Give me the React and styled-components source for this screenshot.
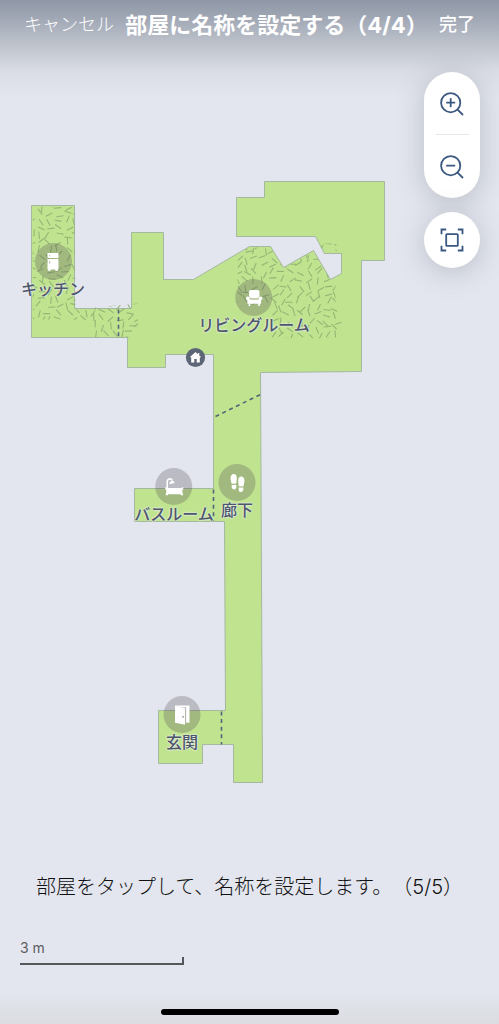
import React from "react";
import styled, { createGlobalStyle } from "styled-components";

const GlobalStyle = createGlobalStyle`
  *, *::before, *::after { box-sizing: border-box; }
  body {
    margin: 0;
    background: #e3e6ee;
    font-family: Inter, "Noto Sans CJK JP", sans-serif;
    text-spacing-trim: space-all;
  }
  button { font: inherit; border: 0; padding: 0; background: none; cursor: pointer; }
`;

const Screen = styled.div`
  display: flex;
  flex-direction: column;
  min-height: 100vh;
  background:
    linear-gradient(to bottom, #9097a6 0, #9aa1af 12px, #b0b6c1 32px, #c6cad2 52px, #dadde5 72px, rgba(227, 230, 238, 0) 98px),
    linear-gradient(to top, #dadce1 0, rgba(227, 230, 238, 0) 32px),
    #e3e6ee;
`;

const Header = styled.header`
  display: flex;
  align-items: center;
  justify-content: space-between;
  height: 50px;
  padding: 0 24px;
  color: #fff;
  white-space: nowrap;
`;

const HeaderButton = styled.button`
  color: #fff;
  font-size: 18px;
  line-height: 28px;
  font-weight: ${(p) => (p.$strong ? 500 : 300)};
`;

const Title = styled.h1`
  margin: 0;
  font-size: 22px;
  line-height: 32px;
  font-weight: 700;
`;

const Stage = styled.main`
  position: relative;
  flex: 1;
`;

const Plan = styled.div`
  position: relative;
  max-width: 560px;
  margin: 0 auto;
`;

const PlanDrawing = styled.svg`
  display: block;
  width: 100%;
  height: auto;
`;

const Pin = styled.button`
  position: absolute;
  left: ${(p) => (p.$x / PLAN.width) * 100}%;
  top: ${(p) => ((p.$y - PLAN.top) / PLAN.height) * 100}%;
  transform: translate(-50%, -18px);
  display: flex;
  flex-direction: column;
  align-items: center;
`;

const PinDisc = styled.span`
  display: grid;
  place-items: center;
  width: 37px;
  height: 37px;
  border-radius: 50%;
  background: rgba(82, 72, 84, 0.27);
`;

const PinLabel = styled.span`
  font-size: 16px;
  line-height: 18px;
  font-weight: 500;
  color: #4d566a;
  white-space: nowrap;
  text-shadow: 0 0 2px #eef0f4, 0 0 2px #eef0f4;
`;

const Controls = styled.div`
  position: absolute;
  top: 22px;
  right: 19px;
  display: flex;
  flex-direction: column;
  gap: 14px;
`;

const ControlGroup = styled.div`
  display: flex;
  flex-direction: column;
  align-items: center;
  width: 56px;
  border-radius: 28px;
  background: #fff;
  box-shadow: 0 4px 28px rgba(70, 76, 92, 0.26);
`;

const ControlButton = styled.button`
  display: grid;
  place-items: center;
  width: 56px;
  height: ${(p) => (p.$round ? 56 : 63)}px;
  color: #3b5881;
`;

const ControlDivider = styled.hr`
  width: 33px;
  height: 1px;
  margin: -1px 0 0;
  border: 0;
  background: #e6e7ea;
`;

const Footer = styled.footer`
  display: flex;
  flex-direction: column;
`;

const Hint = styled.p`
  margin: 0;
  text-align: center;
  font-size: 20px;
  line-height: 32px;
  font-weight: 300;
  color: #111;
`;

const Scale = styled.div`
  width: 164px;
  margin: 36px 0 0 20px;
`;

const ScaleLabel = styled.div`
  font-size: 14px;
  line-height: 18px;
  color: #5b5c60;
`;

const ScaleBar = styled.div`
  height: 8px;
  border: solid #56575b;
  border-width: 0 2px 2px 0;
`;

const HomeIndicator = styled.div`
  width: 178px;
  height: 6px;
  margin: 44px auto 9px;
  border-radius: 3px;
  background: #000;
`;

const PLAN = { width: 499, top: 50, height: 800 };

const OUTLINE =
  "31,205 74,205 74,308 131,308 131,232 163,232 163,279 193,279 249,246 270,246 283,267 313,250 330,279 341,273 341,253 324,253 315,236 236,236 236,197 264,197 264,181 384,181 384,260 361,260 361,371 260,372 262,782 233,782 233,744 202,744 202,763 158,763 158,710 225,710 224,521 134,521 134,488 213,488 213,354 165,354 165,367 127,367 127,337 31,337";

const CARPETS = [
  "32,206 74,206 75,309 137,303 138,337 95,337 88,326 74,319 32,319",
  "237,253 249,247 270,247 283,268 313,251 330,280 335,284 335,306 342,306 342,338 271,338 271,305 237,305",
  "318,243 336,243 336,252 324,252",
];

const DOORS = [
  [118, 309, 118, 337],
  [215, 416, 260, 394],
  [213, 489, 213, 520],
  [221, 711, 221, 744],
];

// Short carpet fibres scattered on a jittered grid with a fixed seed.
function makeFibres(x0, y0, x1, y1, seed) {
  let s = seed;
  const next = () => {
    s = (s * 16807) % 2147483647;
    return s / 2147483647;
  };
  let d = "";
  for (let y = y0; y < y1; y += 7) {
    for (let x = x0; x < x1; x += 9) {
      const cx = x + next() * 6;
      const cy = y + next() * 5;
      const angle = next() * Math.PI;
      const dx = Math.cos(angle) * 3.6;
      const dy = Math.sin(angle) * 3.6;
      d += `M${(cx - dx).toFixed(1)} ${(cy - dy).toFixed(1)}L${(cx + dx).toFixed(1)} ${(cy + dy).toFixed(1)}`;
    }
  }
  return d;
}

const FIBRES = makeFibres(28, 204, 142, 340, 4711) + makeFibres(234, 242, 346, 342, 9137);

function FloorPlan() {
  return (
    <PlanDrawing viewBox={`0 ${PLAN.top} ${PLAN.width} ${PLAN.height}`} aria-hidden="true">
      <defs>
        <clipPath id="carpet">
          {CARPETS.map((points) => (
            <polygon key={points} points={points} />
          ))}
        </clipPath>
      </defs>
      <g transform="translate(0.5 0.5)">
        <polygon points={OUTLINE} fill="#bfe38f" stroke="#a5b8a0" strokeWidth="1" />
        <path d={FIBRES} clipPath="url(#carpet)" stroke="#94b675" strokeWidth="1.1" fill="none" />
        {DOORS.map(([x1, y1, x2, y2]) => (
          <line key={`${x1}-${y1}`} x1={x1} y1={y1} x2={x2} y2={y2} stroke="#56637a" strokeWidth="1.6" strokeDasharray="4 3.6" />
        ))}
        <circle cx="195" cy="357" r="9.6" fill="#5c6677" />
        <path d="M195 351.600l-5.800 5.200h1.500v5.200h3.100v-3.400h2.400v3.400h3.100v-5.200h1.500l-2-1.800v-2.500h-1.500v1.200z" fill="#fff" />
      </g>
    </PlanDrawing>
  );
}

const Fridge = () => (
  <svg width="20" height="20" viewBox="0 0 20 20">
    <path d="M4.500 1h11v5h-11zM4.500 7h11v10.500h-.8V19h-1.900l-.7-1.500H7.900L7.200 19H5.300v-1.500h-.8z" fill="#fff" />
    <path d="M6.700 3v1.300M6.700 8.800v2.800" stroke="#b4bfae" strokeWidth="1" />
  </svg>
);

const Armchair = () => (
  <svg width="20" height="20" viewBox="0 0 20 20">
    <rect x="4.800" y="2" width="10.400" height="8.400" rx="1.600" fill="#fff" />
    <path d="M3.700 8.600c1.200 0 1.900.8 1.900 1.900v.9h8.800v-.9c0-1.100.7-1.900 1.900-1.900s1.900.8 1.900 1.800-.6 1.600-1.400 1.800v3.600h-1.100V18h-1.700v-2.200H6V18H4.300v-2.200H3.200v-3.600c-.8-.2-1.400-.8-1.400-1.800s.7-1.800 1.900-1.800z" fill="#fff" />
    <path d="M4.300 8.200c1.200.3 1.700 1.100 1.700 2.300v.3h8v-.3c0-1.200.5-2 1.700-2.300" fill="none" stroke="#a8bd93" strokeWidth="0.500" />
  </svg>
);

const Bathtub = () => (
  <svg width="20" height="20" viewBox="0 0 20 20">
    <path d="M3 11V4.600A2.600 2.600 0 0 1 8 3.500" fill="none" stroke="#fff" strokeWidth="1.600" />
    <path d="M5.300 7.200c0-2.300 1.300-3.700 3-3.400 1.200.2 2 1 2.100 2.300z" fill="#fff" />
    <path d="M1 10.300h1.500v.8h15v-.8H19v2.200h-.8v3.900h.6v1.800h-2.200v-1H3.700v1H1.500v-1.800h.5v-3.900H1z" fill="#fff" />
  </svg>
);

const Footprints = () => (
  <svg width="20" height="20" viewBox="0 0 20 20">
    <path d="M6.300 1c2 0 3 1.900 3 4.200 0 1.500-.4 3.400-.6 5.400l-4.600.2C3.900 9 3 7.300 3 5.200 3 2.900 4.300 1 6.300 1zM4.200 12l4.600-.2v2.300c0 1.500-.8 2.300-2.100 2.300-1.400 0-2.500-.9-2.500-2.400z" fill="#fff" />
    <path d="M13.700 3.600c2 0 3.300 1.900 3.300 4.200 0 2-.9 3.800-1.100 5.600l-4.600-.2c-.2-2-.6-3.900-.6-5.400 0-2.300 1-4.200 3-4.200zM11.200 14.400l4.600.2v2c0 1.500-1.100 2.400-2.500 2.400-1.300 0-2.100-.8-2.100-2.300z" fill="#fff" />
  </svg>
);

const Door = () => (
  <svg width="20" height="20" viewBox="0 0 20 20">
    <path d="M2.500.6H17v17.200h-3.400V2.200H8z" fill="#fff" />
    <path d="M2.500.6l10 2.600v16.600l-10-2z" fill="#fff" />
    <path d="M13 3v15" stroke="#b8b5b9" strokeWidth="0.800" />
    <circle cx="10.600" cy="11.800" r="0.900" fill="#8f8d92" />
  </svg>
);

const ROOMS = [
  { name: "キッチン", x: 53, y: 261, Icon: Fridge },
  { name: "リビングルーム", x: 254, y: 297, Icon: Armchair },
  { name: "バスルーム", x: 174, y: 486, Icon: Bathtub },
  { name: "廊下", x: 237, y: 482, Icon: Footprints },
  { name: "玄関", x: 182, y: 714, Icon: Door },
];

const ZoomIcon = ({ plus }) => (
  <svg width="24" height="24" viewBox="0 0 24 24" fill="none" stroke="currentColor" strokeWidth="1.8">
    <circle cx="10.7" cy="10.7" r="9.6" />
    <path d="M17.6 17.6l5.400 5.400M6.200 10.700h9" />
    {plus && <path d="M10.700 6.200v9" />}
  </svg>
);

const FitIcon = () => (
  <svg width="24" height="24" viewBox="0 0 24 24" fill="none" stroke="currentColor" strokeWidth="1.8">
    <path d="M1.500 6.200V1.500h4.700M17.800 1.500h4.700v4.700M22.500 17.800v4.700h-4.700M6.200 22.500H1.500v-4.700" />
    <rect x="6.2" y="6.2" width="11.6" height="11.6" rx="0.6" />
  </svg>
);

export default function App() {
  return (
    <>
      <GlobalStyle />
      <Screen>
        <Header>
          <HeaderButton type="button">キャンセル</HeaderButton>
          <Title>部屋に名称を設定する（4/4）</Title>
          <HeaderButton type="button" $strong>完了</HeaderButton>
        </Header>
        <Stage>
          <Plan>
            <FloorPlan />
            {ROOMS.map(({ name, x, y, Icon }) => (
              <Pin key={name} type="button" $x={x} $y={y}>
                <PinDisc><Icon /></PinDisc>
                <PinLabel>{name}</PinLabel>
              </Pin>
            ))}
          </Plan>
          <Controls>
            <ControlGroup>
              <ControlButton type="button" aria-label="拡大"><ZoomIcon plus /></ControlButton>
              <ControlDivider />
              <ControlButton type="button" aria-label="縮小"><ZoomIcon /></ControlButton>
            </ControlGroup>
            <ControlGroup>
              <ControlButton type="button" aria-label="全体を表示" $round><FitIcon /></ControlButton>
            </ControlGroup>
          </Controls>
        </Stage>
        <Footer>
          <Hint>部屋をタップして、名称を設定します。（5/5）</Hint>
          <Scale>
            <ScaleLabel>3 m</ScaleLabel>
            <ScaleBar />
          </Scale>
          <HomeIndicator />
        </Footer>
      </Screen>
    </>
  );
}
